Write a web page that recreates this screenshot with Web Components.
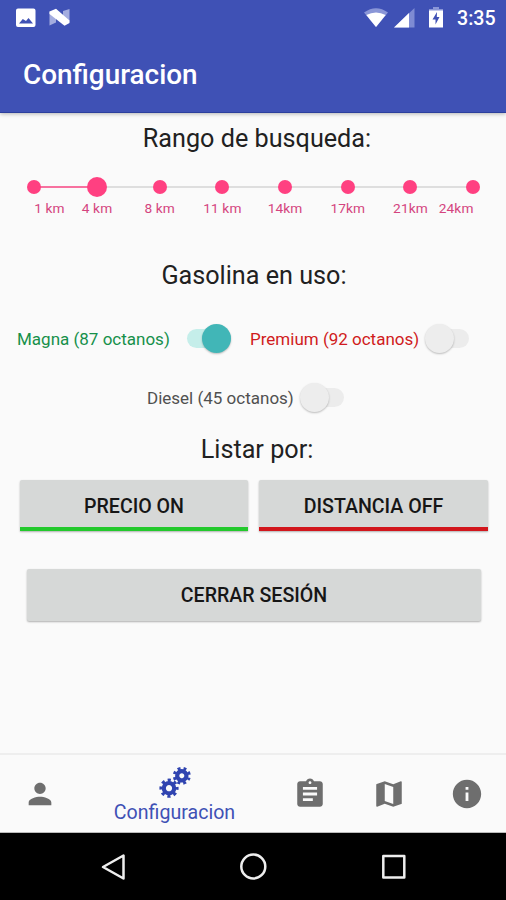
<!DOCTYPE html>
<html lang="es">
<head>
<meta charset="utf-8">
<title>Configuracion</title>
<style>
html,body{margin:0;height:100%;background:#fafafa}
body{font-family:Roboto,"Liberation Sans",sans-serif;overflow:hidden}
</style>
</head>
<body>
<settings-screen></settings-screen>
<script>
const define = (name, render) => customElements.define(name, class extends HTMLElement {
  connectedCallback() {
    if (this.shadowRoot) return;
    this.attachShadow({mode: 'open'}).innerHTML = render(this);
  }
});

define('status-bar', () => `
<style>
:host{display:flex;height:35px;align-items:center;color:#fff;box-sizing:border-box;padding:0 11px 0 16px}
svg{display:block;flex:none}
.n{margin-left:13px}.gap{flex:1}.sig{margin-left:6px}.bat{margin-left:14px}
span{font-size:19.600px;font-weight:500;line-height:35px;margin-left:14px;width:38px;white-space:nowrap;padding-top:2px}
</style>
<svg width="20" height="20" viewBox="0 0 20 20"><path fill="#fff" fill-rule="evenodd" d="M2 .5h15.500a2 2 0 0 1 2 2V17a2 2 0 0 1-2 2H2a2 2 0 0 1-2-2V2.500a2 2 0 0 1 2-2ZM3 15.500H17L12.500 10 10 13 6.800 11Z"/></svg>
<svg class="n" width="22" height="20" viewBox="0 0 22 20"><path fill="#a3acdf" d="M.500 3.500 7 6v8.500L.500 17.500ZM14 3 20.500 1v12.500L14 13Z"/><path fill="#fff" d="M.500 3.500 7 .8 20.500 12.500V15L15.500 17.800 .500 6Z"/></svg>
<div class="gap"></div>
<svg width="24" height="20" viewBox="0 0 24 20"><path fill="#8a96d7" d="M0 4.500Q12-4 24 4.500L12 19Z"/><path fill="#fff" d="M2.300 7Q12 2 21.700 7L12 19Z"/></svg>
<svg class="sig" width="21" height="20" viewBox="0 0 21 20"><path fill="#7e8bd3" d="M0 19.500 20.500 0v19.500Z"/><path fill="#fff" d="M0 19.500 15 5v14.500Z"/></svg>
<svg class="bat" width="14" height="21" viewBox="0 0 14 21"><path fill="#8a96d7" d="M4 0h6v2h4v3H0V2h4Z"/><path fill="#fff" d="M0 3.500h14v17H0Z"/><path fill="#3f51b5" d="M8 5 3.500 12.500h3v5L10.500 10H7.800Z"/></svg>
<span>3:35</span>`);

define('app-bar', () => `
<style>
:host{display:block;height:113px;box-sizing:border-box;background:#3f51b5;border-bottom:1px solid #2c3f9d;box-shadow:0 1px 4px rgba(0,0,0,.28);position:relative}
h1{margin:0;padding-left:23px;font-weight:500;font-size:27.900px;line-height:80px;color:#fff}
</style>
<status-bar></status-bar><h1><slot></slot></h1>`);

define('section-title', () => `
<style>:host{display:block;text-align:center;font-size:25.200px;line-height:32px;color:#212121}</style><slot></slot>`);

define('range-stop', () => `
<style>
:host{display:grid;grid-template-rows:22px 20px;flex:0 0 62.700px;justify-items:center;align-items:center}
i{display:block;width:14px;height:14px;border-radius:50%;background:#ff4081}
:host([active]) i{width:20px;height:20px}
span{font-size:13.700px;line-height:20px;color:#d4447e;white-space:nowrap;letter-spacing:.1px}
:host([first]) span{transform:translateX(15px)}
:host([last]) span{transform:translateX(-17px)}
</style><i></i><span><slot></slot></span>`);

define('range-slider', () => `
<style>
:host{display:flex;padding-left:3px;height:44px;background:
linear-gradient(#f7719f,#f7719f) 34px 10px/63px 2px no-repeat,
linear-gradient(#dedede,#dedede) 97px 10px/376px 2px no-repeat}
</style><slot></slot>`);

define('fuel-switch', () => `
<style>
:host{display:flex;align-items:center;height:30px;font-size:17px;white-space:nowrap}
.text{flex:none;width:var(--w);padding-top:2px}
.track{flex:none;display:flex;align-items:center;width:44px;height:19px;border-radius:10px;background:linear-gradient(#ececec,#ececec) no-repeat right/32px 19px}
.knob{width:29px;height:29px;border-radius:50%;background:#ededed;box-shadow:0 1px 2px rgba(0,0,0,.25);margin-top:1px}
:host([on]) .track{background:#c5eeea;justify-content:flex-end}
:host([on]) .knob{background:#41b6b7}
</style><span class="text"><slot></slot></span><span class="track"><span class="knob"></span></span>`);

define('raised-button', () => `
<style>
:host{display:flex;box-sizing:border-box;align-items:center;justify-content:center;background:#d6d8d7;border-radius:2px;color:#161616;font-size:19.600px;font-weight:500;box-shadow:0 1px 2px rgba(0,0,0,.3);white-space:nowrap}
:host([mark]){border-bottom:4px solid var(--mark);border-radius:2px 2px 0 0;padding-top:6px}
</style><slot></slot>`);

const gear = (x, y, r, turn) => {
  const c = 2 * Math.PI * (r - 1.6);
  return `<g transform="translate(${x} ${y}) rotate(${turn})" fill="none" stroke="#3044b0"><circle r="${r - 4.4}" stroke-width="4.200"/><circle r="${r - 1.6}" stroke-width="3.200" stroke-dasharray="${c / 16} ${c / 16}" stroke-dashoffset="${c / 32}"/></g>`;
};
const icons = {
  person: '<path d="M12 12c2.210 0 4-1.790 4-4s-1.790-4-4-4-4 1.790-4 4 1.790 4 4 4zm0 2c-2.670 0-8 1.340-8 4v2h16v-2c0-2.660-5.330-4-8-4z"/>',
  list: '<path d="M19 3h-4.180C14.400 1.840 13.300 1 12 1s-2.400.84-2.820 2H5c-1.100 0-2 .9-2 2v14c0 1.100.9 2 2 2h14c1.100 0 2-.9 2-2V5c0-1.100-.9-2-2-2zm-7 0c.55 0 1 .45 1 1s-.45 1-1 1-1-.45-1-1 .45-1 1-1zm2 14H7v-2h7v2zm3-4H7v-2h10v2zm0-4H7V7h10v2z"/>',
  map: '<path d="M20.500 3l-.16.030L15 5.100 9 3 3.360 4.900c-.21.070-.36.250-.36.480V20.500c0 .28.220.5.5.5l.16-.030L9 18.900l6 2.100 5.640-1.900c.21-.070.360-.250.360-.480V3.500c0-.28-.220-.5-.5-.5zM15 19l-6-2.110V5l6 2.110V19z"/>',
  info: '<path d="M12 2C6.480 2 2 6.480 2 12s4.480 10 10 10 10-4.480 10-10S17.520 2 12 2zm1 15h-2v-6h2v6zm0-8h-2V7h2v2z"/>'
};
define('nav-item', el => `
<style>
:host{display:flex;flex-direction:column;align-items:center;justify-content:center;box-sizing:border-box}
:host([active]){justify-content:flex-start;padding-top:11px;color:#3f51b5;font-size:19.600px;line-height:26px}
svg{display:block;fill:#6e6e6e}
</style>${el.getAttribute('icon') === 'gears'
  ? `<svg width="34" height="34" viewBox="0 0 34 34">${gear(11, 22.2, 9.6, 0)}${gear(23.8, 9.8, 9, 22.5)}</svg>`
  : `<svg width="34" height="34" viewBox="0 0 24 24">${icons[el.getAttribute('icon')]}</svg>`}<slot></slot>`);

define('bottom-nav', () => `
<style>
:host{display:grid;grid-template-columns:79px 191px 79px 79px 78px;height:80px;box-sizing:border-box;border-top:2px solid #eee;border-bottom:1px solid #bbb}
</style><slot></slot>`);

define('system-keys', () => `
<style>
:host{display:flex;height:67px;background:#000;align-items:center;justify-content:center;gap:112px}
svg{display:block;fill:none;stroke:#eee;stroke-width:2.500;stroke-linejoin:round}
</style>
<svg width="28" height="28" viewBox="0 0 28 28"><path d="M24.500 2.500V25.500L4 14Z"/></svg>
<svg width="28" height="28" viewBox="0 0 28 28"><circle cx="14.300" cy="13.500" r="12"/></svg>
<svg width="28" height="28" viewBox="0 0 28 28"><path d="M4.300 3h21v21.500h-21Z"/></svg>`);

define('settings-screen', () => `
<style>
:host{display:grid;grid-template:113px 640px 80px 67px/506px;width:506px;height:900px;background:#fafafa}
main{display:flex;flex-direction:column;min-width:0}
.row{display:flex}
</style>
<app-bar>Configuracion</app-bar>
<main>
  <section-title style="margin-top:10px;padding-left:8px">Rango de busqueda:</section-title>
  <range-slider style="margin-top:21px">
    <range-stop first>1 km</range-stop><range-stop active>4 km</range-stop><range-stop>8 km</range-stop><range-stop>11 km</range-stop><range-stop>14km</range-stop><range-stop>17km</range-stop><range-stop>21km</range-stop><range-stop last>24km</range-stop>
  </range-slider>
  <section-title style="margin-top:40px;padding-left:2px">Gasolina en uso:</section-title>
  <div class="row" style="margin-top:31px;padding-left:17px;gap:19px">
    <fuel-switch on style="color:#16904a;--w:170px">Magna (87 octanos)</fuel-switch>
    <fuel-switch style="color:#d01a20;--w:175px">Premium (92 octanos)</fuel-switch>
  </div>
  <div class="row" style="margin-top:29px;padding-left:147px">
    <fuel-switch style="color:#505050;--w:153px">Diesel (45 octanos)</fuel-switch>
  </div>
  <section-title style="margin-top:22px;padding-left:8px">Listar por:</section-title>
  <div class="row" style="margin-top:14px;padding:0 18px 0 20px;gap:11px">
    <raised-button mark style="flex:0 0 228px;height:51px;--mark:#23c92c">PRECIO ON</raised-button>
    <raised-button mark style="flex:1 1 0;height:51px;--mark:#d2161c">DISTANCIA OFF</raised-button>
  </div>
  <raised-button style="margin:38px 25px 0 27px;height:52px">CERRAR SESIÓN</raised-button>
</main>
<bottom-nav>
  <nav-item icon="person"></nav-item><nav-item icon="gears" active>Configuracion</nav-item><nav-item icon="list"></nav-item><nav-item icon="map"></nav-item><nav-item icon="info"></nav-item>
</bottom-nav>
<system-keys></system-keys>`);
</script>
</body>
</html>
